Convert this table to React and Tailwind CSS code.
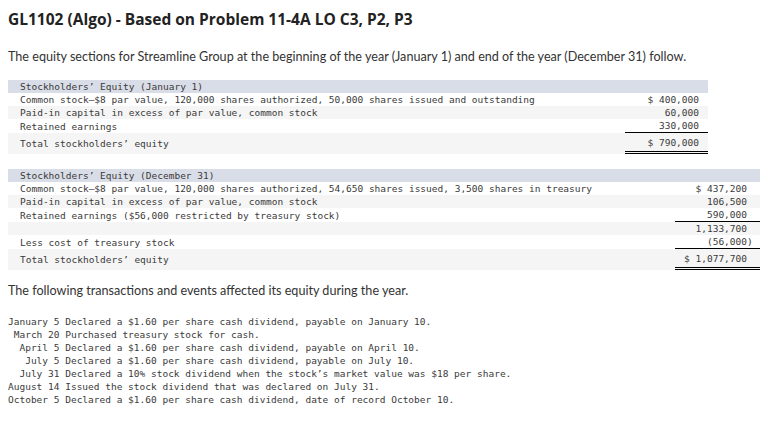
import React from "react";

const mono = { fontFamily: '"DejaVu Sans Mono", "Liberation Mono", monospace' };
const sans = { fontFamily: 'Lato, "Open Sans", sans-serif' };
const titleFont = { fontFamily: '"Open Sans", Lato, sans-serif' };

function Row({ label, value, bg, border, valueClass = "" }) {
  const bcls =
    border === "single"
      ? "border-b border-black"
      : border === "double"
      ? "border-b-[3px] border-double border-black"
      : "";
  const h = border === "double" ? "h-[21px]" : border === "single" ? "h-[14px]" : "h-[13px]";
  return (
    <tr className={bg ? "bg-[#f5f5f5]" : "bg-white"}>
      <td className={`pl-[12px] whitespace-pre ${h} p-0 align-middle`}>{label}</td>
      <td className={`p-0 ${h} text-right whitespace-pre align-middle ${bcls} ${valueClass}`}>{value}</td>
    </tr>
  );
}

export default function App() {
  return (
    <div className="w-[783px] h-[426px] bg-white pl-[8px] overflow-hidden text-[#333]">
      <div className="pt-[9px] text-[15.5px] leading-[20px] font-bold text-[#222]" style={titleFont}>
        GL1102 (Algo) - Based on Problem 11-4A LO C3, P2, P3
      </div>
      <div className="mt-[19px] text-[12.6px] leading-[18px]" style={sans}>
        The equity sections for Streamline Group at the beginning of the year (January 1) and end of the year (December 31) follow.
      </div>

      <table
        className="mt-[14px] w-[700px] border-separate border-spacing-0 text-[9.5px] leading-[13px] text-[#3a3a3a]"
        style={mono}
      >
        <colgroup>
          <col />
          <col className="w-[83px]" />
        </colgroup>
        <tbody>
          <tr className="bg-[#d9dde7]">
            <td className="pl-[12px] h-[13px] p-0">Stockholders’ Equity (January 1)</td>
            <td className="p-0"></td>
          </tr>
          <Row label="Common stock—$8 par value, 120,000 shares authorized, 50,000 shares issued and outstanding" value="$ 400,000" valueClass="pr-[9px]" />
          <Row label="Paid-in capital in excess of par value, common stock" value="60,000" bg valueClass="pr-[9px]" />
          <Row label="Retained earnings" value="330,000" border="single" valueClass="pr-[9px]" />
          <Row label="Total stockholders’ equity" value="$ 790,000" bg border="double" valueClass="pr-[9px]" />
        </tbody>
      </table>

      <table
        className="mt-[15px] w-[752px] border-separate border-spacing-0 text-[9.5px] leading-[13px] text-[#3a3a3a]"
        style={mono}
      >
        <colgroup>
          <col />
          <col className="w-[85px]" />
        </colgroup>
        <tbody>
          <tr className="bg-[#d9dde7]">
            <td className="pl-[12px] h-[13px] p-0">Stockholders’ Equity (December 31)</td>
            <td className="p-0"></td>
          </tr>
          <Row label="Common stock—$8 par value, 120,000 shares authorized, 54,650 shares issued, 3,500 shares in treasury" value="$ 437,200" valueClass="pr-[13px]" />
          <Row label="Paid-in capital in excess of par value, common stock" value="106,500" bg valueClass="pr-[13px]" />
          <Row label="Retained earnings ($56,000 restricted by treasury stock)" value="590,000" border="single" valueClass="pr-[13px]" />
          <Row label="" value="1,133,700" bg valueClass="pr-[13px]" />
          <Row
            label="Less cost of treasury stock"
            value={<span className="mr-[-1ch]">(56,000)</span>}
            border="single"
            valueClass="pr-[13px]"
          />
          <Row label="Total stockholders’ equity" value="$ 1,077,700" bg border="double" valueClass="pr-[13px]" />
        </tbody>
      </table>

      <div className="mt-[12px] text-[12.6px] leading-[18px]" style={sans}>
        The following transactions and events affected its equity during the year.
      </div>

      <div
        className="mt-[15px] text-[9.5px] leading-[13px] whitespace-pre text-[#3a3a3a]"
        style={mono}
      >
        {`January 5 Declared a $1.60 per share cash dividend, payable on January 10.
 March 20 Purchased treasury stock for cash.
  April 5 Declared a $1.60 per share cash dividend, payable on April 10.
   July 5 Declared a $1.60 per share cash dividend, payable on July 10.
  July 31 Declared a 10% stock dividend when the stock’s market value was $18 per share.
August 14 Issued the stock dividend that was declared on July 31.
October 5 Declared a $1.60 per share cash dividend, date of record October 10.`}
      </div>
    </div>
  );
}
